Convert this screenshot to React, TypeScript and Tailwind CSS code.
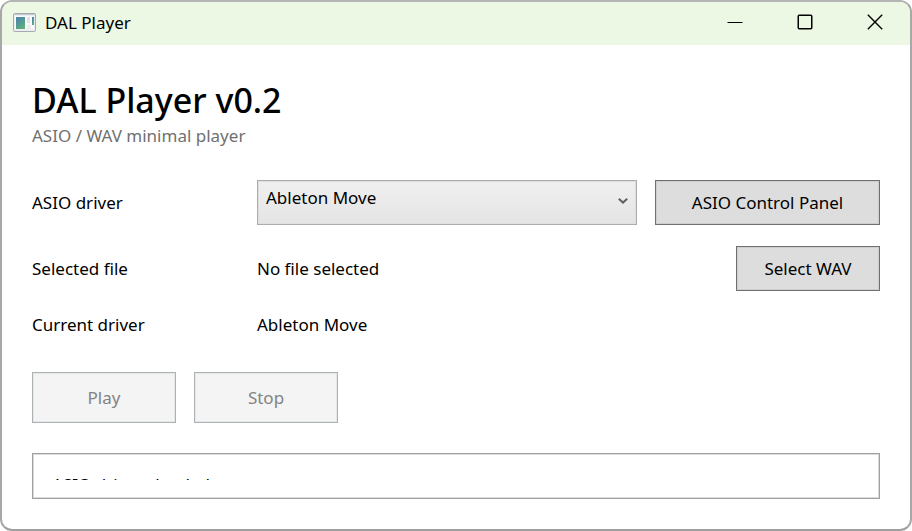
import { useState } from "react";

const DRIVERS = ["Ableton Move"];

function AppIcon() {
  return (
    <svg width="23" height="19" viewBox="0 0 23 19" aria-hidden="true">
      <defs>
        <linearGradient id="pane" x1="0" y1="0" x2="0.6" y2="1">
          <stop offset="0" stopColor="#4a7fb0" />
          <stop offset="1" stopColor="#5fae7c" />
        </linearGradient>
      </defs>
      <rect x="0.5" y="0.5" width="22" height="18" rx="1" fill="#eceef2" stroke="#a6a9ae" />
      <path d="M1 1.5h21" stroke="#c3c7d0" />
      <rect x="2" y="3" width="19" height="13" fill="#fbfbfb" />
      <rect x="3" y="4" width="9" height="12" fill="url(#pane)" />
      <rect x="14" y="4" width="3" height="6" fill="#e3e3e3" />
      <rect x="19" y="4" width="2" height="8" fill="url(#pane)" />
      <rect x="14" y="12" width="4" height="4" fill="#ededed" />
    </svg>
  );
}

function TitleBar() {
  return (
    <header className="flex h-[43px] shrink-0 items-center bg-[#ecf8e3] pb-[3px] pl-[11px] text-black">
      <AppIcon />
      <span className="ml-[9px] flex-1">DAL Player</span>
      <button type="button" aria-label="Minimize" className="flex h-full w-[70px] items-center justify-center">
        <svg width="16" height="16" viewBox="0 0 16 16" fill="none" stroke="#000">
          <path d="M0.5 8.5h15" />
        </svg>
      </button>
      <button type="button" aria-label="Maximize" className="flex h-full w-[70px] items-center justify-center">
        <svg width="16" height="16" viewBox="0 0 16 16" fill="none" stroke="#000" strokeWidth="1.5">
          <rect x="1.25" y="1.25" width="13.5" height="13.5" rx="1" />
        </svg>
      </button>
      <button type="button" aria-label="Close" className="flex h-full w-[70px] items-center justify-center">
        <svg width="16" height="16" viewBox="0 0 16 16" fill="none" stroke="#000" strokeWidth="1.4">
          <path d="M0.8 0.8l14.4 14.4M15.2 0.8L0.8 15.2" />
        </svg>
      </button>
    </header>
  );
}

const BUTTON =
  "border border-[#707070] bg-[#dddddd] text-black shadow-[inset_0_0_0_1px_#cdcdcd] disabled:border-[#adb2b5] disabled:bg-[#f4f4f4] disabled:text-[#838383] disabled:shadow-[inset_0_0_0_1px_#e4e6e7]";

export default function App() {
  const [driver, setDriver] = useState(DRIVERS[0]);

  return (
    <div className="h-screen bg-white font-['Noto_Sans','Open_Sans',sans-serif] text-[17px] leading-[25px] text-black">
      <div className="flex h-full flex-col overflow-hidden rounded-xl border-2 border-t-[#b4b4b4] border-r-[#a8a8a8] border-b-[#9f9f9f] border-l-[#a8a8a8]">
        <TitleBar />
        <main className="flex min-h-0 flex-1 flex-col p-[30px]">
          <h1 className="text-[34px] leading-[51px] font-medium">DAL Player v0.2</h1>
          <p className="leading-[19px] text-[#707070]">ASIO / WAV minimal player</p>

          <div className="mt-[35px] grid grid-cols-[225px_1fr_auto] items-center gap-y-[21px]">
            <label htmlFor="driver">ASIO driver</label>
            <div className="relative">
              <select
                id="driver"
                value={driver}
                onChange={(e) => setDriver(e.target.value)}
                className="block h-[45px] w-full appearance-none border border-[#acacac] bg-linear-to-b from-[#f0f0f0] to-[#e4e4e4] pr-8 pb-[10px] pl-2 shadow-[inset_0_0_0_1px_#dedede]"
              >
                {DRIVERS.map((d) => (
                  <option key={d}>{d}</option>
                ))}
              </select>
              <svg
                className="pointer-events-none absolute top-[17px] right-[9px]"
                width="10"
                height="8"
                viewBox="0 0 10 8"
                fill="none"
                stroke="#606060"
                strokeWidth="2"
              >
                <path d="M0.8 1.8L5 5.6L9.2 1.8" />
              </svg>
            </div>
            <button type="button" className={`ml-[18px] h-[45px] w-[225px] ${BUTTON}`}>
              ASIO Control Panel
            </button>

            <span>Selected file</span>
            <span>No file selected</span>
            <button type="button" className={`h-[45px] w-36 justify-self-end ${BUTTON}`}>
              Select WAV
            </button>

            <span>Current driver</span>
            <span className="col-span-2">{driver}</span>
          </div>

          <div className="mt-[35px] flex gap-[18px]">
            <button type="button" disabled className={`h-[51px] w-36 ${BUTTON}`}>
              Play
            </button>
            <button type="button" disabled className={`h-[51px] w-36 ${BUTTON}`}>
              Stop
            </button>
          </div>

          <div className="mt-[30px] flex min-h-0 flex-1 border border-[#a0a0a0] px-[19px] py-[18px] shadow-[inset_0_0_0_1px_#dcdcdc]">
            <textarea
              readOnly
              aria-label="Log"
              value="ASIO drivers loaded."
              className="block h-full w-full resize-none overflow-hidden outline-none"
            />
          </div>
        </main>
      </div>
    </div>
  );
}
